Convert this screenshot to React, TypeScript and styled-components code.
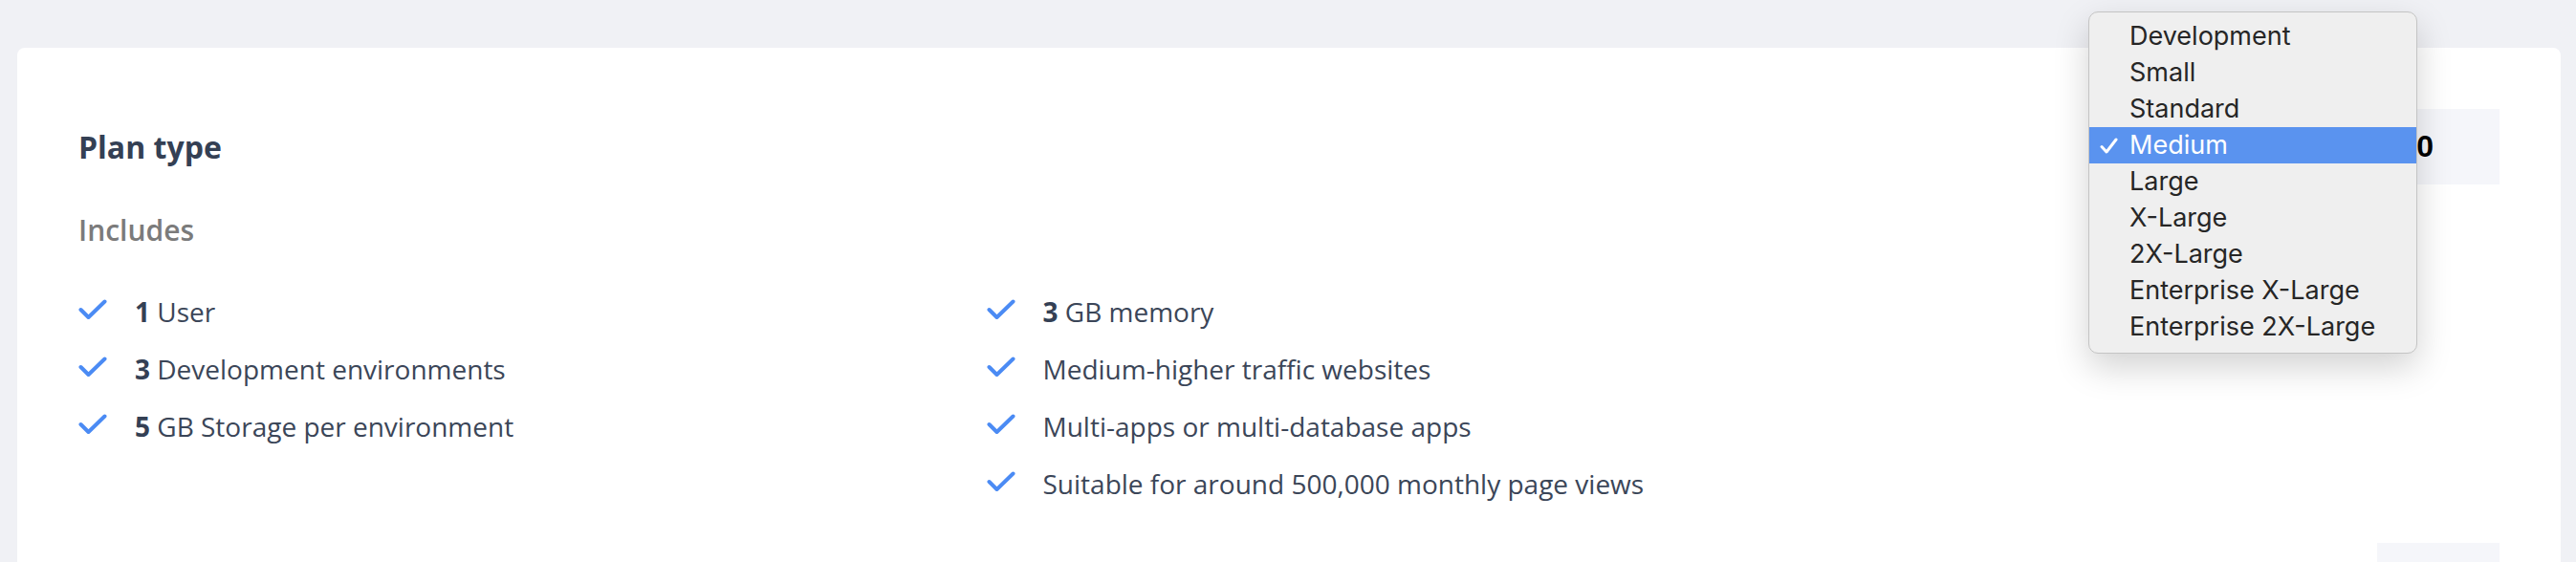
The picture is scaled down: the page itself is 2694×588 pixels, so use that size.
import React from 'react';
import styled, { createGlobalStyle } from 'styled-components';

interface IFeature {
  id: string;
  strong?: string;
  text: string;
}

const leftFeatures: IFeature[] = [
  { id: 'users', strong: '1', text: 'User' },
  { id: 'envs', strong: '3', text: 'Development environments' },
  { id: 'storage', strong: '5', text: 'GB Storage per environment' },
];

const rightFeatures: IFeature[] = [
  { id: 'memory', strong: '3', text: 'GB memory' },
  { id: 'traffic', text: 'Medium-higher traffic websites' },
  { id: 'apps', text: 'Multi-apps or multi-database apps' },
  { id: 'views', text: 'Suitable for around 500,000 monthly page views' },
];

const planOptions = [
  'Development',
  'Small',
  'Standard',
  'Medium',
  'Large',
  'X-Large',
  '2X-Large',
  'Enterprise X-Large',
  'Enterprise 2X-Large',
];

const GlobalStyle = createGlobalStyle`
  html, body {
    margin: 0;
    padding: 0;
    background: #f0f1f5;
  }

  body {
    font-family: 'Open Sans', 'Noto Sans', sans-serif;
  }
`;

const Page = styled.div`
  height: 588px;
  box-sizing: border-box;
  padding: 50px 16px 0 18px;
  overflow: hidden;
`;

const Card = styled.section`
  background: #fff;
  border-radius: 8px 8px 0 0;
  padding: 64px 64px 40px;
`;

const Header = styled.div`
  display: flex;
  align-items: center;
  justify-content: space-between;
  height: 79px;
`;

const Title = styled.h2`
  margin: 0;
  font-size: 32px;
  font-weight: 700;
  color: #344054;
`;

const PriceBox = styled.div`
  position: relative;
  display: flex;
  align-items: center;
  justify-content: flex-end;
  width: 430px;
  height: 79px;
  box-sizing: border-box;
  padding-right: 69px;
  background: #f5f6fa;
  font-family: 'Liberation Sans', Arial, sans-serif;
  font-size: 32px;
  font-weight: 700;
  color: #000;
`;

const Subtitle = styled.h3`
  margin: 27px 0 0;
  font-size: 30px;
  line-height: 42px;
  font-weight: 600;
  color: #7b7b7b;
`;

const Features = styled.div`
  display: grid;
  grid-template-columns: 3fr 5fr;
  margin-top: 43px;
`;

const FeatureList = styled.ul`
  display: flex;
  flex-direction: column;
  gap: 18px;
  margin: 0;
  padding: 0;
  list-style: none;
`;

const FeatureRow = styled.li`
  display: flex;
  align-items: flex-start;
  height: 42px;
  font-size: 28px;
  line-height: 42px;
  color: #3b4658;

  strong {
    font-weight: 700;
    color: #344054;
  }
`;

const CheckIcon = styled.svg`
  flex: none;
  width: 30px;
  height: 22px;
  margin: 8px 29px 0 0;
`;

const Footer = styled.div`
  display: flex;
  justify-content: flex-end;
  margin-top: 41px;
`;

const GhostBox = styled.div`
  width: 128px;
  height: 60px;
  background: #f5f6fa;
`;

const Menu = styled.ul`
  position: absolute;
  top: -102px;
  left: 0;
  z-index: 2;
  width: 344px;
  box-sizing: border-box;
  margin: 0;
  padding: 6px 0 8px;
  list-style: none;
  background: #efefef;
  border: 1px solid #c4c4c4;
  border-radius: 10px;
  box-shadow: 0 14px 36px rgba(0, 0, 0, 0.18);
  font-family: Inter, 'Liberation Sans', sans-serif;
  font-size: 27px;
  font-weight: 400;
  text-align: left;
`;

const MenuItem = styled.li<{ $active?: boolean }>`
  position: relative;
  height: 38px;
  line-height: 38px;
  padding-left: 42px;
  color: ${(p) => (p.$active ? '#fff' : '#262626')};
  background: ${(p) => (p.$active ? '#5a93ef' : 'transparent')};
`;

const MenuCheck = styled.svg`
  position: absolute;
  left: 11px;
  top: 11px;
  width: 19px;
  height: 17px;
`;

const Check = () => (
  <CheckIcon viewBox="0 0 30 22" fill="none">
    <path
      d="M2.5 11 L10.5 19 L27.5 2.5"
      stroke="#4b8bf4"
      strokeWidth="4"
      strokeLinecap="round"
      strokeLinejoin="round"
    />
  </CheckIcon>
);

const FeatureColumn: React.FC<{ items: IFeature[] }> = ({ items }) => (
  <FeatureList>
    {items.map(({ id, strong, text }) => (
      <FeatureRow key={id}>
        <Check />
        <span>
          {strong && <strong>{strong}</strong>}
          {strong ? ' ' : ''}
          {text}
        </span>
      </FeatureRow>
    ))}
  </FeatureList>
);

const App: React.FC = () => {
  const selected = 'Medium';

  return (
    <>
      <GlobalStyle />
      <Page>
        <Card>
          <Header>
            <Title>Plan type</Title>
            <PriceBox>
              $120
              <Menu>
                {planOptions.map((option) => (
                  <MenuItem key={option} $active={option === selected}>
                    {option === selected && (
                      <MenuCheck viewBox="0 0 19 17" fill="none">
                        <path
                          d="M2 9.5 L7 15 L17 2"
                          stroke="#fff"
                          strokeWidth="3"
                          strokeLinecap="round"
                          strokeLinejoin="round"
                        />
                      </MenuCheck>
                    )}
                    {option}
                  </MenuItem>
                ))}
              </Menu>
            </PriceBox>
          </Header>

          <Subtitle>Includes</Subtitle>

          <Features>
            <FeatureColumn items={leftFeatures} />
            <FeatureColumn items={rightFeatures} />
          </Features>

          <Footer>
            <GhostBox />
          </Footer>
        </Card>
      </Page>
    </>
  );
};

export default App;
